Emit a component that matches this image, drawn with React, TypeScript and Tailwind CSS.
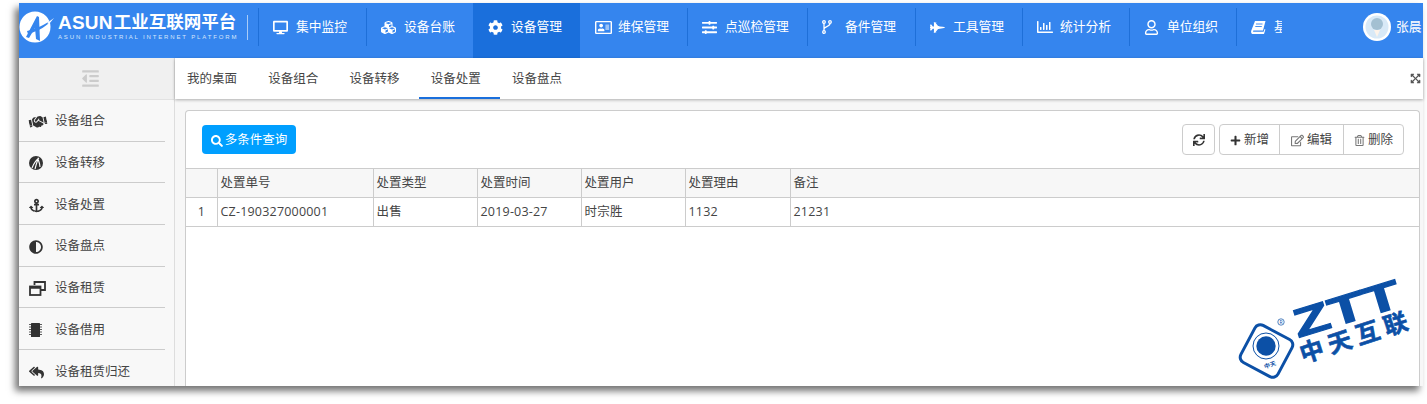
import {
  FaAdjust,
  FaAnchor,
  FaCog,
  FaCubes,
  FaDesktop,
  FaExpandArrowsAlt,
  FaFighterJet,
  FaHandshake,
  FaOutdent,
  FaPlus,
  FaRegAddressCard,
  FaRegChartBar,
  FaRegEdit,
  FaRegTrashAlt,
  FaRegUser,
  FaReplyAll,
  FaSearch,
  FaSlidersH,
  FaSync,
} from "react-icons/fa"

function ForkIcon() {
  return (
    <svg viewBox="0 0 10 14" className="h-[14px] w-[10px]" fill="none" stroke="currentColor" strokeWidth="1.3">
      <circle cx="2" cy="2" r="1.3" />
      <circle cx="8" cy="2" r="1.3" />
      <circle cx="2" cy="12" r="1.3" />
      <path d="M2 3.3 V10.7 M8 3.3 C8 7 2.5 6 2 9" />
    </svg>
  )
}

function TiltedBook() {
  return (
    <svg viewBox="0 0 15 13" className="h-[13px] w-[15px]" fill="currentColor">
      <path d="M4 0 H14.5 L12 9.5 H2.5 C2 9.5 1.8 10.8 2.6 10.8 H12.6 L13.6 8 L14.4 8.6 L13 13 H2 C0.4 13 -0.3 11 0.3 9.5 Z" />
      <path d="M5 3 H11.5 M4.3 5.5 H10.8" stroke="#3585ee" strokeWidth="0.9" />
    </svg>
  )
}

function DiscIcon() {
  return (
    <svg viewBox="0 0 14 14" className="h-[14px] w-[14px]">
      <circle cx="7" cy="7" r="7" fill="#333" />
      <path d="M3 12 C5 7 7 4 10 2 M6 13 C7 9 8 6 9 3 C10 6 11 8 11 11" fill="none" stroke="#fff" strokeWidth="1.1" />
    </svg>
  )
}

function RestoreIcon() {
  return (
    <svg viewBox="0 0 17 15" className="h-[15px] w-[17px]" fill="none" stroke="#333">
      <path d="M5.5 4 V1 H16 V9 H12" strokeWidth="1.8" />
      <rect x="1" y="5.5" width="10.5" height="8.5" strokeWidth="1.8" />
      <path d="M1 6.5 H11.5" strokeWidth="2.5" />
    </svg>
  )
}

function ChipIcon() {
  return (
    <svg viewBox="0 0 13 14" className="h-[14px] w-[13px]">
      <rect x="2" y="0" width="9" height="14" rx="0.5" fill="#333" />
      <path d="M0 1.5 H13 M0 4 H13 M0 6.5 H13 M0 9 H13 M0 11.5 H13" stroke="#333" strokeWidth="0.8" />
    </svg>
  )
}

const navItems = [
  { label: "集中监控", icon: <FaDesktop />, width: "w-[108px]" },
  { label: "设备台账", icon: <FaCubes />, width: "w-[107px]" },
  { label: "设备管理", icon: <FaCog />, width: "w-[107px]", active: true },
  { label: "维保管理", icon: <FaRegAddressCard className="text-[17px]" />, width: "w-[107px]", noSep: true },
  { label: "点巡检管理", icon: <FaSlidersH />, width: "w-[120px]" },
  { label: "备件管理", icon: <ForkIcon />, width: "w-[108px]" },
  { label: "工具管理", icon: <FaFighterJet />, width: "w-[107px]" },
  { label: "统计分析", icon: <FaRegChartBar className="text-[16px]" />, width: "w-[107px]" },
  { label: "单位组织", icon: <FaRegUser />, width: "w-[107px]" },
  { label: "基础数据", icon: <TiltedBook />, width: "w-[107px]" },
]

const sideItems = [
  { label: "设备组合", icon: <FaHandshake className="-rotate-12 text-[18px]" /> },
  { label: "设备转移", icon: <DiscIcon /> },
  { label: "设备处置", icon: <FaAnchor className="text-[15px]" /> },
  { label: "设备盘点", icon: <FaAdjust className="text-[14px]" /> },
  { label: "设备租赁", icon: <RestoreIcon /> },
  { label: "设备借用", icon: <ChipIcon /> },
  { label: "设备租赁归还", icon: <FaReplyAll className="text-[15px]" /> },
]

const tabs = ["我的桌面", "设备组合", "设备转移", "设备处置", "设备盘点"]

const columns = [
  { label: "", width: "w-[31px]" },
  { label: "处置单号", width: "w-[156px]" },
  { label: "处置类型", width: "w-[104px]" },
  { label: "处置时间", width: "w-[104px]" },
  { label: "处置用户", width: "w-[104px]" },
  { label: "处置理由", width: "w-[105px]" },
  { label: "备注", width: "" },
]

const row = ["CZ-190327000001", "出售", "2019-03-27", "时宗胜", "1132", "21231"]

function AsunMark() {
  return (
    <svg viewBox="0 0 36 34" className="h-[34px] w-[36px] shrink-0">
      <circle cx="16" cy="17" r="15.5" fill="#fff" />
      <path d="M18 6 L7 27 L10 28 L16 18 L17 29 L21 31 L20 7 Z" fill="#3585ee" />
      <path d="M8 21 C16 19 26 15 35 8 C28 16 20 21 9 24 Z" fill="#3585ee" />
      <path d="M28 13 L35 8 L30 14 Z" fill="#fff" />
    </svg>
  )
}

function Avatar() {
  return (
    <svg viewBox="0 0 28 28" className="h-[28px] w-[28px] shrink-0">
      <circle cx="14" cy="14" r="14" fill="#fff" />
      <circle cx="14" cy="14" r="11.5" fill="#d8e9f7" />
      <circle cx="14" cy="11" r="6" fill="#a3c0d2" />
      <path d="M11 17 L17 17 L14 24 Z" fill="#fdf3ea" />
    </svg>
  )
}

function ZttLogo() {
  return (
    <svg viewBox="0 0 180 105" className="absolute bottom-[3px] right-[4px] h-[105px] w-[180px]">
      <rect
        x="10.5"
        y="52"
        width="42"
        height="42"
        rx="6"
        transform="rotate(28 31.5 73)"
        fill="#fff"
        stroke="#0c50a6"
        strokeWidth="3"
      />
      <circle cx="31" cy="68" r="13" fill="none" stroke="#0c50a6" strokeWidth="1" />
      <circle cx="31" cy="68" r="9.7" fill="#0c50a6" />
      <text x="30" y="91" transform="rotate(-20 30 91)" fontSize="6" fontWeight="700" fill="#0c50a6">
        中天
      </text>
      <circle cx="46" cy="44" r="3.2" fill="none" stroke="#0c50a6" strokeWidth="0.7" />
      <text x="46" y="46" fontSize="5" textAnchor="middle" fill="#0c50a6">
        R
      </text>
      <text
        x="63"
        y="60"
        transform="rotate(-17 63 60)"
        fontSize="40"
        fontWeight="700"
        textLength="110"
        lengthAdjust="spacingAndGlyphs"
        fill="#0c50a6"
        stroke="#0c50a6"
        strokeWidth="1.2"
        style={{ fontFamily: "'Liberation Sans', sans-serif" }}
      >
        ZTT
      </text>
      <text
        x="68"
        y="85"
        transform="rotate(-18 68 85)"
        fontSize="24"
        fontWeight="700"
        textLength="112"
        fill="#0c50a6"
        stroke="#0c50a6"
        strokeWidth="0.6"
        style={{ fontFamily: "'Noto Sans CJK SC', sans-serif" }}
      >
        中天互联
      </text>
    </svg>
  )
}

export default function App() {
  return (
    <div className="h-[404px] w-[1427px] overflow-hidden bg-white pl-[19px] pt-[3px] font-['Open_Sans','Noto_Sans_CJK_SC',sans-serif] text-[12.5px] text-[#444]">
      <div className="flex h-[383px] w-[1404px] flex-col shadow-[-4px_5px_7px_rgba(0,0,0,0.55)]">
        {/* Top bar */}
        <header className="flex h-[55px] shrink-0 bg-[#3585ee] text-white">
          <div className="flex w-[239px] shrink-0 items-center pb-[7px]">
            <AsunMark />
            <div className="ml-[3px] flex w-[181px] flex-col">
              <div className="flex h-[19px] items-center whitespace-nowrap font-['Liberation_Sans','Noto_Sans_CJK_SC',sans-serif] text-[17.5px] font-bold leading-none">
                <span className="mr-[1px] text-[19px] tracking-[0.2px]">ASUN</span>工业互联网平台
              </div>
              <div className="mt-[1px] whitespace-nowrap font-['Liberation_Sans',sans-serif] text-[6px] leading-[8px] tracking-[1.85px] text-[#d5e5fb]">
                ASUN INDUSTRIAL INTERNET PLATFORM
              </div>
            </div>
            <div className="ml-[8px] h-[25px] w-px bg-[#a9ccf8]" />
          </div>
          <nav className="flex w-[1024px] shrink-0 overflow-hidden">
            {navItems.map((item) => (
              <div
                key={item.label}
                className={`flex h-full shrink-0 items-center pb-[7px] ${item.width} ${item.active ? "bg-[#1a6fdc]" : ""}`}
              >
                <div className={`h-[38px] w-px ${item.noSep || item.active ? "" : "bg-[#1e6fd8]"}`} />
                <div className="ml-[14px] flex w-[23px] shrink-0 items-center text-[15px]">{item.icon}</div>
                <span className="whitespace-nowrap text-[12.75px]">{item.label}</span>
              </div>
            ))}
          </nav>
          <div className="ml-[81px] flex items-center gap-[5px] overflow-hidden pb-[8px]">
            <Avatar />
            <span className="whitespace-nowrap text-[12.75px]">张晨</span>
          </div>
        </header>

        <div className="flex min-h-0 flex-1">
          {/* Sidebar */}
          <aside className="w-[156px] shrink-0 overflow-hidden border-r border-[#dddddd] bg-[#f8f8f8]">
            <div className="flex h-[42px] items-center justify-center border-b border-[#e2e2e2] bg-[#f0f0f0] pr-[12px] text-[19px] text-[#cccccc]">
              <FaOutdent />
            </div>
            <div className="mr-[9px]">
              {sideItems.map((item) => (
                <div
                  key={item.label}
                  className="flex h-[41.67px] items-center border-b border-[#cccccc] pl-[10px] pt-[3px] last:border-b-0"
                >
                  <div className="flex w-[26px] shrink-0 items-center text-[#333]">{item.icon}</div>
                  <span className="whitespace-nowrap">{item.label}</span>
                </div>
              ))}
            </div>
          </aside>

          <main className="flex min-w-0 flex-1 flex-col bg-[#f7f7f7]">
            {/* Tabs */}
            <div className="relative z-10 flex h-[41px] shrink-0 bg-white shadow-[0_1px_3px_rgba(0,0,0,0.3)]">
              {tabs.map((tab, i) => (
                <div
                  key={tab}
                  className={`flex h-full items-center whitespace-nowrap border-b-2 pl-[12px] pr-[19.25px] pt-[3px] text-[#444] ${
                    i === 3 ? "border-[#1a6fdc]" : "border-transparent"
                  }`}
                >
                  {tab}
                </div>
              ))}
              <div className="ml-auto flex items-center pr-[2px] text-[11px] text-[#555]">
                <FaExpandArrowsAlt />
              </div>
            </div>

            {/* Panel */}
            <section className="relative ml-[10px] mr-[3px] mt-[11px] min-h-0 flex-1 rounded-t border border-b-0 border-[#cccccc] bg-white">
              <div className="flex h-[57px] items-center justify-between pl-[16px] pr-[15px]">
                <button className="flex h-[29px] w-[94px] items-center justify-center gap-[2px] rounded bg-[#009fff] pt-[2px] text-white">
                  <FaSearch className="text-[12px]" />
                  <span>多条件查询</span>
                </button>
                <div className="flex items-center gap-[4px]">
                  <button className="flex h-[31px] w-[33px] items-center justify-center rounded border border-[#cccccc] text-[12px] text-[#333]">
                    <FaSync />
                  </button>
                  <div className="flex h-[31px] w-[185px] rounded border border-[#cccccc]">
                    <button className="flex w-[60px] items-center justify-center gap-[3px] border-r border-[#cccccc] pt-[2px]">
                      <FaPlus className="text-[11px] text-[#333]" />
                      新增
                    </button>
                    <button className="flex w-[64px] items-center justify-center gap-[3px] border-r border-[#cccccc] pt-[2px]">
                      <FaRegEdit className="text-[13px] text-[#777]" />
                      编辑
                    </button>
                    <button className="flex flex-1 items-center justify-center gap-[3px] pt-[2px]">
                      <FaRegTrashAlt className="text-[11px] text-[#777]" />
                      删除
                    </button>
                  </div>
                </div>
              </div>
              <table className="w-full table-fixed border-collapse">
                <thead>
                  <tr className="h-[29px] border-y border-[#cccccc] bg-[#f7f7f7]">
                    {columns.map((col, i) => (
                      <th
                        key={col.label || "index"}
                        className={`px-[3px] pt-[1px] text-left font-normal ${col.width} ${i < 6 ? "border-r border-[#cccccc]" : ""}`}
                      >
                        {col.label}
                      </th>
                    ))}
                  </tr>
                </thead>
                <tbody>
                  <tr className="h-[29px] border-b border-[#cccccc]">
                    <td className="border-r border-[#cccccc] pt-[1px] text-center">1</td>
                    {row.map((cell, i) => (
                      <td
                        key={cell}
                        className={`px-[3px] pt-[1px] tracking-[0.2px] ${i < 5 ? "border-r border-[#cccccc]" : ""}`}
                      >
                        {cell}
                      </td>
                    ))}
                  </tr>
                </tbody>
              </table>
              <ZttLogo />
            </section>
          </main>
        </div>
      </div>
    </div>
  )
}
